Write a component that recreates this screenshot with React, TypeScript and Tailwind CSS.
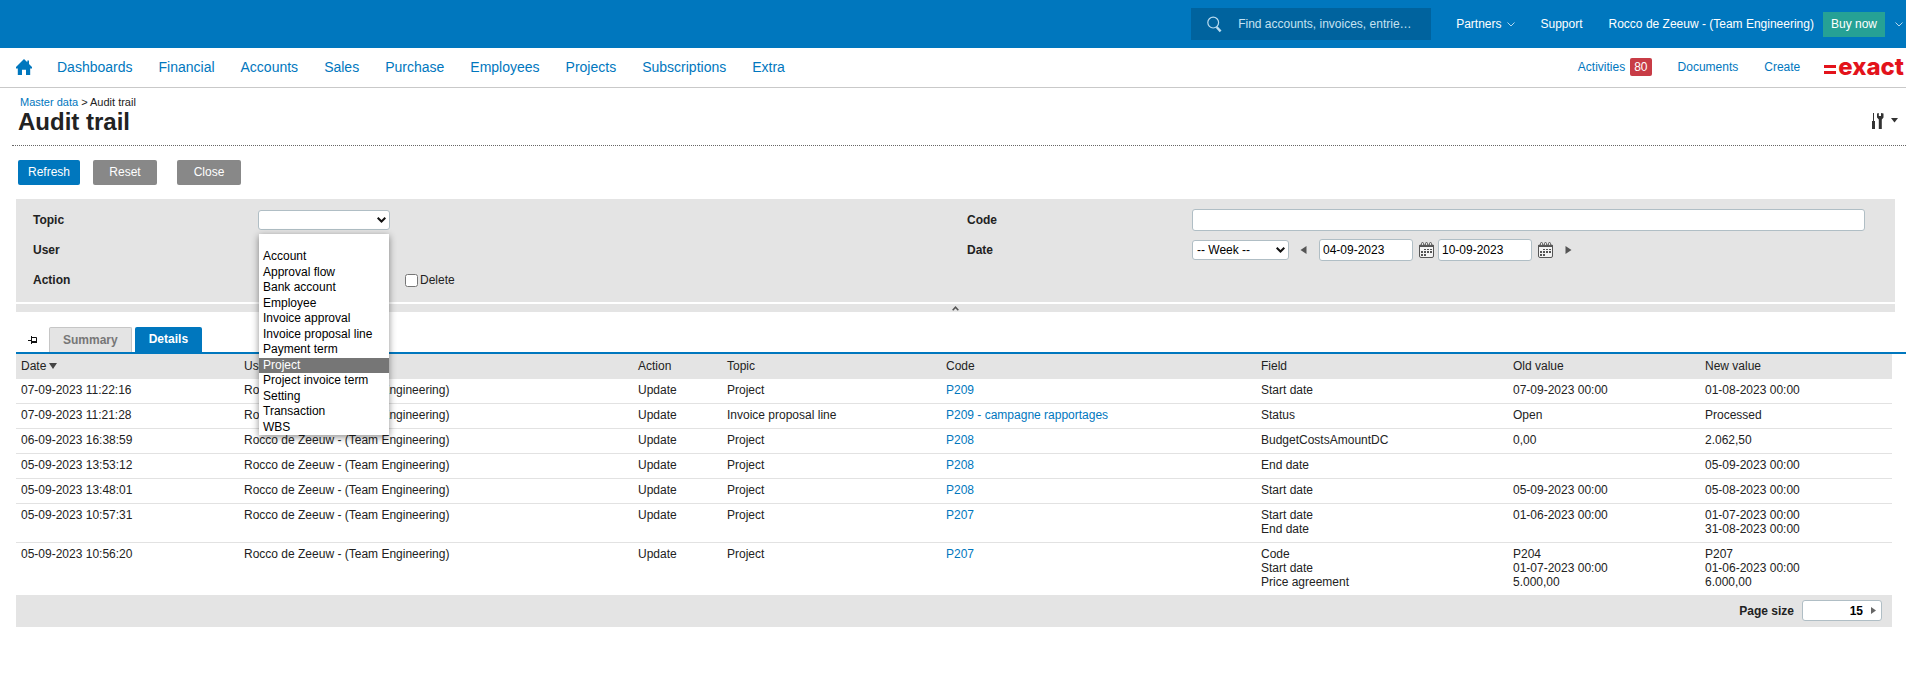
import { useState } from 'react';
import clsx from 'clsx';

interface AuditLine {
  date: string;
  topic: string;
  code: string;
  fields: string[];
  oldValues: string[];
  newValues: string[];
}

const MENU = ['Dashboards', 'Financial', 'Accounts', 'Sales', 'Purchase', 'Employees', 'Projects', 'Subscriptions', 'Extra'];

const TOPICS = [
  '', 'Account', 'Approval flow', 'Bank account', 'Employee', 'Invoice approval', 'Invoice proposal line',
  'Payment term', 'Project', 'Project invoice term', 'Setting', 'Transaction', 'WBS',
];

const USER = 'Rocco de Zeeuw - (Team Engineering)';

const LINES: AuditLine[] = [
  { date: '07-09-2023 11:22:16', topic: 'Project', code: 'P209', fields: ['Start date'], oldValues: ['07-09-2023 00:00'], newValues: ['01-08-2023 00:00'] },
  { date: '07-09-2023 11:21:28', topic: 'Invoice proposal line', code: 'P209 - campagne rapportages', fields: ['Status'], oldValues: ['Open'], newValues: ['Processed'] },
  { date: '06-09-2023 16:38:59', topic: 'Project', code: 'P208', fields: ['BudgetCostsAmountDC'], oldValues: ['0,00'], newValues: ['2.062,50'] },
  { date: '05-09-2023 13:53:12', topic: 'Project', code: 'P208', fields: ['End date'], oldValues: [], newValues: ['05-09-2023 00:00'] },
  { date: '05-09-2023 13:48:01', topic: 'Project', code: 'P208', fields: ['Start date'], oldValues: ['05-09-2023 00:00'], newValues: ['05-08-2023 00:00'] },
  { date: '05-09-2023 10:57:31', topic: 'Project', code: 'P207', fields: ['Start date', 'End date'], oldValues: ['01-06-2023 00:00'], newValues: ['01-07-2023 00:00', '31-08-2023 00:00'] },
  { date: '05-09-2023 10:56:20', topic: 'Project', code: 'P207', fields: ['Code', 'Start date', 'Price agreement'], oldValues: ['P204', '01-07-2023 00:00', '5.000,00'], newValues: ['P207', '01-06-2023 00:00', '6.000,00'] },
];

const INPUT = 'rounded-[3px] border border-[#b0bec5] bg-white text-black outline-none';

function ThinChevron() {
  return (
    <svg width="8" height="5" viewBox="0 0 8 5" fill="none" stroke="#b5d8ee" strokeWidth="1">
      <path d="M0.5 0.5 L4 4 L7.5 0.5" />
    </svg>
  );
}

function SelectChevron() {
  return (
    <svg className="pointer-events-none absolute right-1 top-1/2 -translate-y-1/2" width="9" height="6" viewBox="0 0 9 6" fill="none" stroke="#111" strokeWidth="2">
      <path d="M0.7 0.8 L4.5 4.5 L8.3 0.8" />
    </svg>
  );
}

function CalendarIcon() {
  return (
    <svg width="15" height="16" viewBox="0 0 15 16">
      <path d="M0.5 3.5h14v10.5a1.5 1.5 0 0 1-1.5 1.5h-11a1.5 1.5 0 0 1-1.5-1.5z" fill="#f4f4f4" stroke="#555" />
      <path d="M0 4a1.5 1.5 0 0 1 1.5-1.5h12a1.5 1.5 0 0 1 1.5 1.5v1h-15z" fill="#555" />
      <rect x="2.5" y="0.5" width="2" height="3" rx="1" fill="#e4e4e4" stroke="#555" />
      <rect x="6.5" y="0.5" width="2" height="3" rx="1" fill="#e4e4e4" stroke="#555" />
      <rect x="10.5" y="0.5" width="2" height="3" rx="1" fill="#e4e4e4" stroke="#555" />
      <path d="M5 7h2v1h-2zM8 7h2v1h-2zM11 7h2v1h-2zM2 9h2v2h-2zM5 9h2v2h-2zM8 9h2v2h-2zM11 9h2v2h-2zM2 12h2v2h-2zM5 12h2v2h-2z" fill="#555" />
    </svg>
  );
}

function Triangle({ left }: { left?: boolean }) {
  return (
    <svg width="7" height="8" viewBox="0 0 7 8" fill="#555">
      {left ? <path d="M6.5 0v8L0.5 4z" /> : <path d="M0.5 0v8L6.5 4z" />}
    </svg>
  );
}

function TopBar() {
  return (
    <header className="flex h-12 items-center justify-end bg-[#0077be] pr-[3px] text-white">
      <div className="flex h-8 w-60 items-center gap-4 bg-[#00639e] pl-4">
        <svg width="15" height="17" viewBox="0 0 15 17" fill="none" stroke="#b9dcf0">
          <circle cx="6.2" cy="6.6" r="5.4" strokeWidth="1.2" />
          <path d="M9.6 11 L13.6 15.4" strokeWidth="2.4" />
        </svg>
        <input aria-label="Search" placeholder="Find accounts, invoices, entrie…" className="min-w-0 flex-1 bg-transparent outline-none placeholder:text-[#c5e2f2]" />
      </div>
      <a href="#partners" className="ml-[25px] flex items-center gap-[5px]">Partners <ThinChevron /></a>
      <a href="#support" className="ml-[26px]">Support</a>
      <a href="#user" className="ml-[26px]">{USER}</a>
      <button className="ml-[9px] h-[25px] bg-[#26a195] px-2">Buy now</button>
      <button aria-label="More" className="ml-[10px]"><ThinChevron /></button>
    </header>
  );
}

function NavBar() {
  return (
    <nav className="flex h-10 items-center border-b border-[#c9c9c9] pr-[2px] pb-px pl-4 text-[#0077be]">
      <a href="#home" aria-label="Home" className="mr-[25px]">
        <svg width="16" height="16" viewBox="0 0 16 16" fill="#0077be">
          <path d="M8 0L11.3 3.2V1.6H13V4.9L16 8V9.4H14.2V16H10V10.8H6V16H1.8V9.4H0V8z" />
        </svg>
      </a>
      <div className="flex gap-[26px] text-sm">
        {MENU.map(m => <a key={m} href={`#${m.toLowerCase()}`}>{m}</a>)}
      </div>
      <div className="ml-auto flex items-center">
        <a href="#activities" className="flex items-center gap-[5px]">
          Activities
          <span className="rounded-[2px] bg-[#c83c46] px-1 text-white leading-[18px]">80</span>
        </a>
        <a href="#documents" className="ml-[26px]">Documents</a>
        <a href="#create" className="ml-[26px]">Create</a>
        <a href="#exact" className="ml-6 flex items-center gap-[2px] text-[#e3131b]">
          <svg width="12" height="13" viewBox="0 0 12 13" fill="#e3131b">
            <path d="M0 4H12V7H0zM0 10H12V13H0z" />
          </svg>
          <span className="font-['Inter',sans-serif] text-2xl leading-6 font-extrabold">exact</span>
        </a>
      </div>
    </nav>
  );
}

function TitleBar() {
  return (
    <div className="ml-3 flex items-center justify-between border-b border-dotted border-[#666] pt-[7px] pr-2 pb-[11px]">
      <div className="pl-[6px]">
        <div className="pb-px pl-[2px] text-[11px] leading-[14px]">
          <a href="#master-data" className="text-[#0077be]">Master data</a> &gt; Audit trail
        </div>
        <h1 className="text-2xl leading-6 font-bold">Audit trail</h1>
      </div>
      <button aria-label="Tools" className="flex items-center gap-[7px] pt-3">
        <svg width="12" height="16" viewBox="0 0 12 16" fill="#333">
          <path d="M1 0H2V8H3V16H0V8H1z" />
          <path d="M5 0.5L6.8 0V3H9V0L11.5 0.5V4.5L9.8 6.5V16H6.8V6.5L5 4.5z" />
        </svg>
        <svg width="7" height="5" viewBox="0 0 7 5" fill="#333"><path d="M0 0H7L3.5 4.5z" /></svg>
      </button>
    </div>
  );
}

function TopicSelect({ topic, onPick }: { topic: string; onPick: (t: string) => void }) {
  return (
    <div className="relative">
      <select id="topic" value="" onChange={e => onPick(e.target.value)} className={clsx(INPUT, 'block h-5 w-[132px] appearance-none px-1')}>
        {TOPICS.map(t => <option key={t} value={t}>{t}</option>)}
      </select>
      <SelectChevron />
      <ul role="listbox" aria-label="Topic" className="absolute top-6 left-px z-10 grid h-[201px] w-[130px] auto-rows-fr bg-white text-black shadow-[0_2px_7px_rgba(0,0,0,0.45)]">
        {TOPICS.map(t => (
          <li key={t} role="option" aria-selected={t === topic} onClick={() => onPick(t)}
            className={clsx('pl-1 leading-[15px] whitespace-nowrap', t === topic && 'bg-[#767676] text-white')}>
            {t}
          </li>
        ))}
      </ul>
    </div>
  );
}

function Filters() {
  const [topic, setTopic] = useState('Project');
  return (
    <div className="mr-[11px] ml-4">
      <div className="grid grid-cols-2 gap-9 bg-[#e4e4e4] pt-[6px] pr-[30px] pb-[7px] pl-[17px]">
        <div>
          <div className="flex h-[30px] items-center">
            <label htmlFor="topic" className="w-[225px] font-bold">Topic</label>
            <TopicSelect topic={topic} onPick={setTopic} />
          </div>
          <div className="flex h-[30px] items-center font-bold">User</div>
          <div className="flex h-[30px] items-center">
            <span className="w-[225px] font-bold">Action</span>
            <label className="ml-[147px] flex items-center gap-[2px]">
              <input type="checkbox" className="size-[13px]" />
              Delete
            </label>
          </div>
        </div>
        <div>
          <div className="flex h-[30px] items-center">
            <label htmlFor="code" className="w-[225px] font-bold">Code</label>
            <input id="code" className={clsx(INPUT, 'h-[22px] min-w-0 flex-1 px-[3px]')} />
          </div>
          <div className="flex h-[30px] items-center">
            <label htmlFor="period" className="w-[225px] font-bold">Date</label>
            <div className="relative">
              <select id="period" className={clsx(INPUT, 'block h-5 w-[97px] appearance-none px-1')}>
                <option>-- Week --</option>
              </select>
              <SelectChevron />
            </div>
            <button aria-label="Previous" className="mr-3 ml-[11px]"><Triangle left /></button>
            <input aria-label="From" defaultValue="04-09-2023" className={clsx(INPUT, 'h-[22px] w-[94px] px-[3px]')} />
            <button aria-label="Pick start date" className="mr-1 ml-[6px]"><CalendarIcon /></button>
            <input aria-label="To" defaultValue="10-09-2023" className={clsx(INPUT, 'h-[22px] w-[94px] px-[3px]')} />
            <button aria-label="Pick end date" className="mr-3 ml-[6px]"><CalendarIcon /></button>
            <button aria-label="Next"><Triangle /></button>
          </div>
        </div>
      </div>
      <button aria-label="Collapse" className="mt-[2px] flex h-2 w-full items-center justify-center bg-[#e4e4e4]">
        <svg width="7" height="5" viewBox="0 0 7 5" fill="none" stroke="#555" strokeWidth="1.6"><path d="M0.7 4.2L3.5 1.2L6.3 4.2" /></svg>
      </button>
    </div>
  );
}

function Tabs() {
  return (
    <div className="mt-[15px] ml-4 flex border-b-2 border-[#0077be] pl-3">
      <button aria-label="Pin" className="mr-3 w-[9px]">
        <svg width="9" height="8" viewBox="0 0 9 8" fill="none" stroke="#111">
          <path d="M0 4.5H3M3.5 0V8M3.5 1.5H8.5V5.5H3.5" />
          <path d="M3 6H9" strokeWidth="2" />
        </svg>
      </button>
      <button className="h-[25px] rounded-t-[2px] border border-b-0 border-[#c6c6c6] bg-[#e4e4e4] px-[13px] pb-px font-bold text-[#777]">Summary</button>
      <button className="ml-[3px] h-[25px] rounded-t-[2px] bg-[#0077be] px-[14px] pb-px font-bold text-white">Details</button>
    </div>
  );
}

function AuditTable() {
  return (
    <div className="mr-[14px] ml-4">
      <table className="w-full table-fixed text-left align-top">
        <colgroup>
          <col className="w-[223px]" />
          <col className="w-[394px]" />
          <col className="w-[89px]" />
          <col className="w-[219px]" />
          <col className="w-[315px]" />
          <col className="w-[252px]" />
          <col className="w-[192px]" />
          <col className="w-[192px]" />
        </colgroup>
        <thead>
          <tr className="h-[25px] bg-[#e4e4e4] *:px-[5px] *:pb-[2px] *:font-normal">
            <th>
              <span className="flex items-center gap-[3px]">
                Date
                <svg width="8" height="6" viewBox="0 0 8 6" fill="#444"><path d="M0 0H8L4 6z" /></svg>
              </span>
            </th>
            <th>User</th>
            <th>Action</th>
            <th>Topic</th>
            <th>Code</th>
            <th>Field</th>
            <th>Old value</th>
            <th>New value</th>
          </tr>
        </thead>
        <tbody>
          {LINES.map(l => (
            <tr key={l.date} className="border-b border-[#e2e2e2] align-top leading-[14px] last:border-b-0 *:px-[5px] *:pt-1 *:pb-[6px]">
              <td>{l.date}</td>
              <td>{USER}</td>
              <td>Update</td>
              <td>{l.topic}</td>
              <td><a href="#code" className="text-[#0077be]">{l.code}</a></td>
              <td>{l.fields.map(v => <div key={v}>{v}</div>)}</td>
              <td>{l.oldValues.map(v => <div key={v}>{v}</div>)}</td>
              <td>{l.newValues.map(v => <div key={v}>{v}</div>)}</td>
            </tr>
          ))}
        </tbody>
      </table>
      <div className="flex h-8 items-center justify-end gap-2 bg-[#e4e4e4] pr-[10px] pb-px">
        <label htmlFor="page-size" className="font-bold">Page size</label>
        <div className={clsx(INPUT, 'flex h-[21px] w-20 items-center gap-2 pr-[5px]')}>
          <input id="page-size" defaultValue="15" className="min-w-0 flex-1 text-right font-bold outline-none" />
          <svg width="5" height="7" viewBox="0 0 5 7" fill="#666"><path d="M0 0V7L5 3.5z" /></svg>
        </div>
      </div>
    </div>
  );
}

export default function App() {
  return (
    <div className="min-h-screen bg-white font-['Liberation_Sans',Arial,sans-serif] text-xs text-[#222]">
      <TopBar />
      <NavBar />
      <TitleBar />
      <div className="flex py-[14px] pl-[18px] text-white">
        <button className="h-[25px] w-[62px] rounded-[2px] bg-[#0077be] pb-[2px]">Refresh</button>
        <button className="ml-[13px] h-[25px] w-16 rounded-[2px] bg-[#888] pb-[2px]">Reset</button>
        <button className="ml-5 h-[25px] w-16 rounded-[2px] bg-[#888] pb-[2px]">Close</button>
      </div>
      <Filters />
      <Tabs />
      <AuditTable />
    </div>
  );
}
